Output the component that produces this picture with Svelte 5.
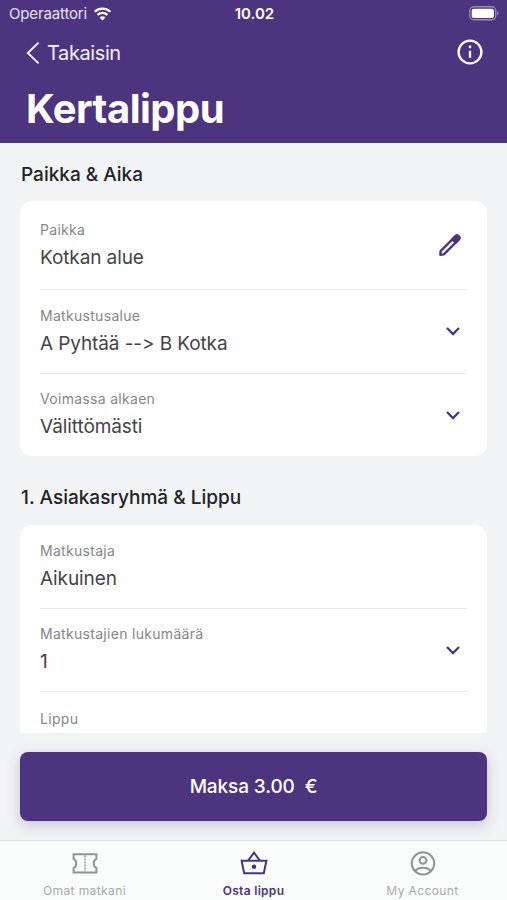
<script lang="ts">
  type Field = { label: string; value?: string; icon?: 'edit' | 'chevron' };

  const placeAndTime: Field[] = [
    { label: 'Paikka', value: 'Kotkan alue', icon: 'edit' },
    { label: 'Matkustusalue', value: 'A Pyhtää --> B Kotka', icon: 'chevron' },
    { label: 'Voimassa alkaen', value: 'Välittömästi', icon: 'chevron' },
  ];

  const customerAndTicket: Field[] = [
    { label: 'Matkustaja', value: 'Aikuinen' },
    { label: 'Matkustajien lukumäärä', value: '1', icon: 'chevron' },
    { label: 'Lippu' },
  ];

  const tabs = [
    { id: 'trips', label: 'Omat matkani' },
    { id: 'buy', label: 'Osta lippu' },
    { id: 'account', label: 'My Account' },
  ];

  let activeTab = $state('buy');
</script>

{#snippet fieldRow(field: Field)}
  <div class="field" class:empty={!field.value}>
    <div class="field-text">
      <span class="field-label">{field.label}</span>
      {#if field.value}
        <span class="field-value">{field.value}</span>
      {/if}
    </div>
    {#if field.icon === 'edit'}
      <svg class="icon-edit" viewBox="0 0 24 24" aria-hidden="true">
        <path d="M2.6 18.2 17.4 3.4a2.2 2.2 0 0 1 3.2 3.2L5.8 21.4l-3.4.4z" />
        <path class="tip" d="m14.4 6.4 3-3a2.2 2.2 0 0 1 3.2 3.2l-3 3z" />
      </svg>
    {:else if field.icon === 'chevron'}
      <svg class="icon-chevron" viewBox="0 0 16 10" aria-hidden="true">
        <path d="m2 2 6 6 6-6" />
      </svg>
    {/if}
  </div>
{/snippet}

<div class="screen">
  <header class="top">
    <div class="status">
      <div class="carrier">
        <span>Operaattori</span>
        <svg class="wifi" viewBox="0 0 20 15" aria-hidden="true">
          <path d="M1.6 5.1a12.2 12.2 0 0 1 16.8 0" />
          <path d="M4.7 8.5a7.7 7.7 0 0 1 10.6 0" />
          <path class="dot" d="M6.9 11.2a4.6 4.6 0 0 1 6.2 0L10 14.4z" />
        </svg>
      </div>
      <span class="clock">10.02</span>
      <svg class="battery" viewBox="0 0 31 15" aria-hidden="true">
        <rect class="shell" x="0.75" y="0.75" width="26" height="13" rx="4" />
        <rect class="charge" x="2.7" y="2.7" width="22.2" height="9.2" rx="2" />
        <path class="cap" d="M28.2 5.2c1.8.7 1.8 3.5 0 4.2z" />
      </svg>
    </div>
    <div class="nav">
      <button class="back">
        <svg viewBox="0 0 14 24" aria-hidden="true"><path d="M12.6 1.6 1.8 12l10.8 10.4" /></svg>
        <span>Takaisin</span>
      </button>
      <button class="info" aria-label="Info">
        <svg viewBox="0 0 26 26" aria-hidden="true">
          <circle cx="13" cy="13" r="11.4" />
          <path d="M13 11.8v7M13 6.6v2.6" />
        </svg>
      </button>
    </div>
    <h1>Kertalippu</h1>
  </header>

  <main class="content">
    <h2>Paikka &amp; Aika</h2>
    <section class="card first">
      {#each placeAndTime as field (field.label)}
        {@render fieldRow(field)}
      {/each}
    </section>

    <h2 class="second">1. Asiakasryhmä &amp; Lippu</h2>
    <section class="card last">
      {#each customerAndTicket as field (field.label)}
        {@render fieldRow(field)}
      {/each}
    </section>
  </main>

  <div class="pay-area">
    <button class="pay">Maksa 3.00&nbsp; €</button>
  </div>

  <nav class="tabs">
    {#each tabs as tab (tab.id)}
      <button class="tab" class:active={activeTab === tab.id} onclick={() => (activeTab = tab.id)}>
        <svg viewBox="0 0 28 28" aria-hidden="true">
          {#if tab.id === 'trips'}
            <path d="M2.6 5.2h22.8v4.7q-2.6 1.2-2.6 4.5t2.6 4.5v4.7H2.6v-4.7q2.6-1.2 2.6-4.5T2.6 9.9z" />
            <path class="perforation" d="M14 6.4v16" />
          {:else if tab.id === 'buy'}
            <path d="M1.6 11.7h24.8l-2.6 12.5H4.2zM8.3 11.4 14 3.6l5.7 7.8" />
            <circle class="solid" cx="14" cy="17.8" r="2.3" />
          {:else}
            <circle cx="14" cy="14.4" r="11.2" />
            <circle cx="14" cy="11.3" r="3.4" />
            <path d="M6.2 22c3.8-4.2 11.8-4.2 15.6 0" />
          {/if}
        </svg>
        <span>{tab.label}</span>
      </button>
    {/each}
  </nav>
</div>

<style>
  :global(body) {
    background: #f2f3f5;
  }
  .screen {
    --purple: #4d347f;
    display: flex;
    flex-direction: column;
    width: 507px;
    height: 900px;
    overflow: hidden;
    background: #f2f3f5;
    font-family: Inter, 'Liberation Sans', sans-serif;
    font-variant-ligatures: none;
    font-feature-settings: 'calt' 0;
    color: #222326;
  }
  button {
    appearance: none;
    border: 0;
    padding: 0;
    background: none;
    font: inherit;
    color: inherit;
    cursor: pointer;
  }
  svg {
    display: block;
    flex: none;
    fill: none;
    stroke: currentColor;
  }
  h1,
  h2 {
    margin: 0;
  }

  .top {
    flex: none;
    box-sizing: border-box;
    height: 143px;
    background: var(--purple);
    color: #fff;
  }
  .status {
    display: grid;
    grid-template-columns: 1fr auto 1fr;
    align-items: center;
    height: 27px;
    padding: 0 7px 0 9px;
    font-size: 15px;
  }
  .carrier {
    display: flex;
    align-items: center;
    gap: 6px;
    color: #e6e1ef;
    letter-spacing: -0.15px;
  }
  .wifi {
    width: 19px;
    height: 14px;
    color: #fff;
    stroke-width: 2.4;
  }
  .wifi .dot {
    fill: currentColor;
    stroke: none;
  }
  .clock {
    font-weight: 600;
  }
  .battery {
    justify-self: end;
    width: 31px;
    height: 15px;
  }
  .battery .shell {
    stroke: #9a8bb8;
    stroke-width: 1.3;
  }
  .battery .charge {
    fill: #fff;
    stroke: none;
  }
  .battery .cap {
    fill: #9a8bb8;
    stroke: none;
  }
  .nav {
    display: flex;
    align-items: center;
    justify-content: space-between;
    height: 50px;
    padding: 0 24px 0 26px;
  }
  .back {
    display: flex;
    align-items: center;
    gap: 7px;
    padding-top: 1px;
    font-size: 20px;
    letter-spacing: -0.4px;
    color: #f3f0f8;
  }
  .back svg {
    width: 14px;
    height: 24px;
    stroke-width: 2;
  }
  .info svg {
    width: 26px;
    height: 26px;
    stroke-width: 2.3;
  }
  h1 {
    padding-left: 26px;
    font-size: 40px;
    line-height: 64px;
    font-weight: 700;
    letter-spacing: -0.5px;
  }

  .content {
    flex: none;
    box-sizing: border-box;
    height: 590px;
    padding: 0 20px;
    overflow: hidden;
  }
  h2 {
    height: 58px;
    padding-left: 1px;
    font-size: 19px;
    line-height: 63px;
    font-weight: 500;
  }
  h2.second {
    height: 69px;
    line-height: 84px;
  }
  .card {
    padding: 0 20px;
    background: #fff;
    border-radius: 12px;
  }
  .card.last {
    border-radius: 12px 12px 2px 2px;
  }
  .field {
    display: flex;
    align-items: center;
    justify-content: space-between;
    box-sizing: border-box;
    height: 83.5px;
    border-bottom: 1px solid #e9e9eb;
  }
  .field:last-child {
    height: 82.5px;
    border-bottom: 0;
  }
  .card.first .field:first-child {
    height: 89px;
  }
  .field.empty:last-child {
    align-items: flex-start;
    height: 41px;
    padding-top: 15px;
  }
  .field-text {
    display: flex;
    flex-direction: column;
    gap: 1px;
    padding-top: 1px;
  }
  .field-label {
    font-size: 14px;
    line-height: 22px;
    letter-spacing: 0.3px;
    color: #85868a;
  }
  .field-value {
    font-size: 19px;
    line-height: 31px;
    letter-spacing: -0.1px;
    color: #434347;
  }
  .icon-chevron {
    width: 16px;
    height: 10px;
    margin-right: 6px;
    color: var(--purple);
    stroke-width: 2.3;
  }
  .icon-edit {
    width: 24px;
    height: 24px;
    margin-right: 5px;
    color: var(--purple);
    stroke-width: 2.4;
    stroke-linejoin: round;
  }
  .icon-edit .tip {
    fill: currentColor;
  }

  .pay-area {
    flex: none;
    box-sizing: border-box;
    height: 107px;
    padding: 19px 20px 0;
  }
  .pay {
    display: block;
    width: 100%;
    height: 69px;
    border-radius: 8px;
    background: var(--purple);
    box-shadow: 0 4px 14px rgba(77, 52, 127, 0.25);
    color: #fff;
    font-size: 19px;
    font-weight: 500;
    letter-spacing: -0.1px;
  }

  .tabs {
    flex: 1;
    display: grid;
    grid-template-columns: repeat(3, 1fr);
    border-top: 1px solid #dededf;
    background: #fafcfb;
  }
  .tab {
    display: flex;
    flex-direction: column;
    align-items: center;
    padding-top: 8px;
    gap: 4px;
    font-size: 12px;
    line-height: 19px;
    letter-spacing: 0.4px;
    color: #a8aaac;
  }
  .tab svg {
    width: 28px;
    height: 28px;
    color: #929496;
    stroke-width: 2;
  }
  .tab.active,
  .tab.active svg {
    color: var(--purple);
  }
  .tab.active span {
    font-weight: 600;
    letter-spacing: 0.3px;
  }
  .tab .perforation {
    stroke-width: 1.4;
    stroke-dasharray: 2 1;
  }
  .tab .solid {
    fill: currentColor;
    stroke: none;
  }
</style>
